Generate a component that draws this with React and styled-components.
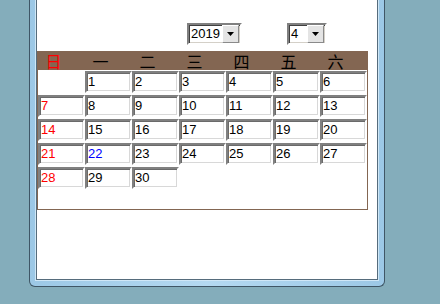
import React from "react";
import styled, { createGlobalStyle } from "styled-components";

const Global = createGlobalStyle`
  html, body { margin: 0; padding: 0; }
  body {
    background: #84adbb;
    font-family: "Liberation Sans", Arial, sans-serif;
  }
`;

const Window = styled.div`
  box-sizing: border-box;
  margin-left: 29px;
  width: 356px;
  height: 287px;
  padding: 0 6px 6px;
  background: linear-gradient(to right, #9cc8e6, #b4d9f1 50%, #9cc8e6);
  border: 1px solid #3f5666;
  border-top: none;
  border-radius: 0 0 6px 6px;
`;

const Pane = styled.div`
  box-sizing: border-box;
  height: 100%;
  background: #fff;
  border: 1px solid #566c7c;
  border-top: none;
  box-shadow: 0 0 0 1px #cfe7f7;
  padding-top: 23px;
`;

const Toolbar = styled.div`
  display: flex;
  gap: 45px;
  padding-left: 150px;
  height: 22px;
  margin-bottom: 6px;
`;

const SelectBox = styled.div`
  box-sizing: border-box;
  width: ${(p) => p.$w}px;
  height: 22px;
  display: flex;
  border: 2px solid;
  border-color: #808080 #fff #fff #808080;
  box-shadow: inset 1px 1px 0 #404040, inset -1px -1px 0 #d4d0c8;
  background: #fff;
`;

const SelectText = styled.div`
  flex: 1;
  padding-left: 2px;
  font: 13px/18px "Liberation Sans", Arial, sans-serif;
  color: #000;
`;

const DropButton = styled.div`
  box-sizing: border-box;
  width: 17px;
  height: 18px;
  margin-right: 1px;
  display: flex;
  align-items: center;
  justify-content: center;
  background: #e4e4e4;
  border: 1px solid;
  border-color: #fff #8a8a8a #8a8a8a #fff;
`;

const Arrow = () => (
  <svg width="7" height="4" viewBox="0 0 7 4">
    <polygon points="0,0 7,0 3.5,4" fill="#000" />
  </svg>
);

const Calendar = styled.div`
  box-sizing: border-box;
  width: 331px;
  border: 1px solid #836652;
  padding-bottom: 20px;
`;

const HeadRow = styled.div`
  display: grid;
  grid-template-columns: repeat(7, 47px);
  height: 18px;
  background: #836652;
  margin-bottom: 1px;
`;

const HeadCell = styled.div`
  text-align: center;
  padding-right: 16px;
  font: 16px/18px "Noto Sans CJK SC", "Noto Sans CJK JP", sans-serif;
  color: ${(p) => p.$tone};
`;

const Grid = styled.div`
  display: grid;
  grid-template-columns: repeat(7, 47px);
  grid-auto-rows: 22px;
  row-gap: 2px;
`;

const DayCell = styled.div`
  box-sizing: border-box;
  border: 2px solid;
  border-color: #808080 #fff #fff #808080;
  box-shadow: inset 1px 1px 0 #6a6a6a, inset -1px -1px 0 #d8d8d8;
  padding-left: 1px;
  font: 13px/18px "Liberation Sans", Arial, sans-serif;
  color: ${(p) => p.$tone};
`;

const Blank = styled.div``;

const heads = ["日", "一", "二", "三", "四", "五", "六"];

export default function App() {
  const cells = [];
  const startOffset = 1;
  for (let i = 0; i < startOffset; i++) cells.push(null);
  for (let d = 1; d <= 30; d++) cells.push(d);

  return (
    <>
      <Global />
      <Window>
        <Pane>
          <Toolbar>
            <SelectBox $w={55}>
              <SelectText>2019</SelectText>
              <DropButton>
                <Arrow />
              </DropButton>
            </SelectBox>
            <SelectBox $w={40}>
              <SelectText>4</SelectText>
              <DropButton>
                <Arrow />
              </DropButton>
            </SelectBox>
          </Toolbar>
          <Calendar>
            <HeadRow>
              {heads.map((h, i) => (
                <HeadCell key={h} $tone={i === 0 ? "#ff0000" : "#000"}>
                  {h}
                </HeadCell>
              ))}
            </HeadRow>
            <Grid>
              {cells.map((d, i) => {
                if (d === null) return <Blank key={"b" + i} />;
                const sunday = i % 7 === 0;
                const tone = d === 22 ? "#0000ff" : sunday ? "#ff0000" : "#000";
                return (
                  <DayCell key={d} $tone={tone}>
                    {d}
                  </DayCell>
                );
              })}
            </Grid>
          </Calendar>
        </Pane>
      </Window>
    </>
  );
}
